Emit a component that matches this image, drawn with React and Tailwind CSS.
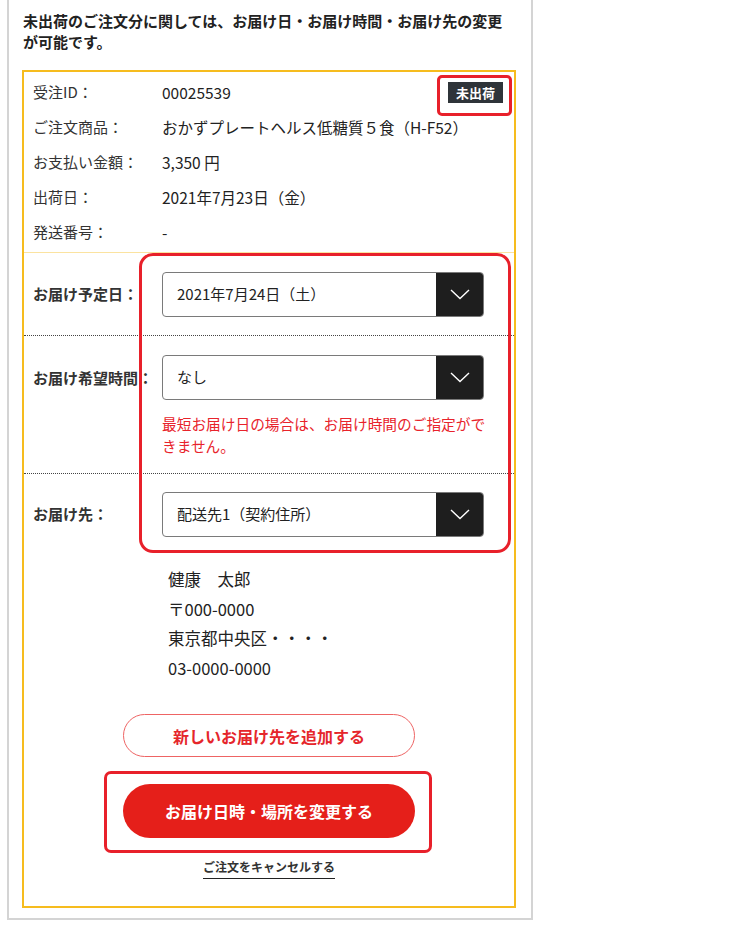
import React from "react";

const Chevron = () => (
  <svg width="20" height="11" viewBox="0 0 20 11" fill="none">
    <polyline points="1,1 10,9.5 19,1" stroke="#ffffff" strokeWidth="1.4" fill="none" />
  </svg>
);

const Select = ({ value }) => (
  <div className="flex h-[45px] w-[322px] rounded-[4px] border-[1.5px] border-[#7a7a7a] bg-white overflow-hidden">
    <div className="flex-1 flex items-center pl-[14px] text-[15px] text-[#222]">{value}</div>
    <div className="w-[47px] bg-[#1e1e1e] flex items-center justify-center">
      <Chevron />
    </div>
  </div>
);

const InfoRow = ({ label, value, children }) => (
  <div className="flex items-center h-[35px]">
    <div className="w-[129px] text-[15px] text-[#333]">{label}</div>
    <div className="text-[15.5px] text-[#222]">{value}</div>
    {children}
  </div>
);

export default function App() {
  return (
    <div
      className="relative w-[750px] h-[932px] bg-white"
      style={{ fontFamily: '"Noto Sans CJK JP", "Noto Sans", sans-serif' }}
    >
      <div className="ml-[7px] w-[526px] border-x-2 border-b-2 border-[#d4d4d4] pt-[10px] pb-[10px]">
        <p className="pl-[14px] pr-[20px] text-[15px] font-bold leading-[21px] text-[#222]">
          未出荷のご注文分に関しては、お届け日・お届け時間・お届け先の変更が可能です。
        </p>

        <div className="mt-[18px] ml-[13px] w-[494px] border-2 border-[#f6bc1e]">
          {/* info */}
          <div className="pt-[3px] pb-[2px] pl-[9px] border-b border-[#fbe3a0]">
            <InfoRow label="受注ID：" value="00025539">
              <div className="ml-auto mr-[11px] h-[21px] px-[8px] bg-[#2f3439] text-white text-[13px] font-bold leading-[21px]">
                未出荷
              </div>
            </InfoRow>
            <InfoRow label="ご注文商品：" value="おかずプレートヘルス低糖質５食（H-F52）" />
            <InfoRow label="お支払い金額：" value="3,350 円" />
            <InfoRow label="出荷日：" value="2021年7月23日（金）" />
            <InfoRow label="発送番号：" value="-" />
          </div>

          {/* delivery date */}
          <div className="flex items-center pl-[9px] pt-[19px] pb-[18px] border-b border-dotted border-[#444]">
            <div className="w-[129px] text-[15px] font-bold text-[#333]">お届け予定日：</div>
            <Select value="2021年7月24日（土）" />
          </div>

          {/* delivery time */}
          <div className="flex items-start pl-[9px] pt-[19px] pb-[16px] border-b border-dotted border-[#444]">
            <div className="w-[129px] h-[45px] leading-[45px] text-[15px] font-bold text-[#333] whitespace-nowrap">
              お届け希望時間：
            </div>
            <div className="flex flex-col">
              <Select value="なし" />
              <p className="mt-[13px] w-[332px] text-[14.7px] leading-[22px] text-[#e8232b]">
                最短お届け日の場合は、お届け時間のご指定ができません。
              </p>
            </div>
          </div>

          {/* destination */}
          <div className="flex items-center pl-[9px] pt-[18px]">
            <div className="w-[129px] text-[15px] font-bold text-[#333]">お届け先：</div>
            <Select value="配送先1（契約住所）" />
          </div>

          <div className="mt-[28px] pl-[144px] text-[16.5px] leading-[29.5px] text-[#222]">
            <p>健康　太郎</p>
            <p>〒000-0000</p>
            <p>東京都中央区・・・・</p>
            <p>03-0000-0000</p>
          </div>

          <div className="flex flex-col items-center pt-[31px] pb-[27px]">
            <button className="w-[292px] h-[43px] rounded-full border-[1.5px] border-[#ee6464] bg-white text-[#e5262b] text-[16px] font-bold">
              新しいお届け先を追加する
            </button>
            <button className="mt-[27px] w-[292px] h-[54px] rounded-full bg-[#e51f1a] text-white text-[16px] font-bold">
              お届け日時・場所を変更する
            </button>
            <span className="mt-[20px] text-[12px] leading-[18px] font-bold text-[#333] pb-[2px] border-b-[1.5px] border-[#222]">
              ご注文をキャンセルする
            </span>
          </div>
        </div>
      </div>

      {/* annotation highlights */}
      <div className="absolute left-[437px] top-[75px] w-[75px] h-[41px] border-[3px] border-[#e8202a] rounded-[5px]" />
      <div className="absolute left-[139px] top-[253px] w-[372px] h-[300px] border-[3.5px] border-[#e8202a] rounded-[14px]" />
      <div className="absolute left-[104px] top-[771px] w-[328px] h-[82px] border-[3.5px] border-[#e8202a] rounded-[7px]" />
    </div>
  );
}
